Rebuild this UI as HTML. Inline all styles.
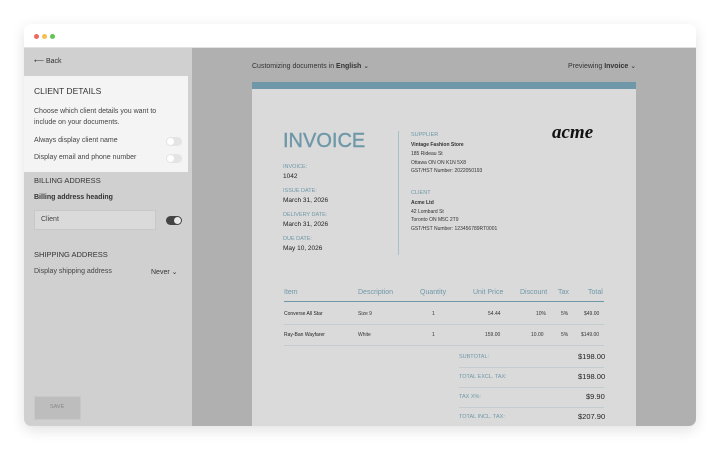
<!DOCTYPE html>
<html><head><meta charset="utf-8"><style>
*{margin:0;padding:0;box-sizing:border-box}
body{width:720px;height:450px;background:#fff;font-family:"Liberation Sans",sans-serif;position:relative;overflow:hidden;color:#333}
.win{position:absolute;left:24px;top:24px;width:672px;height:402px;border-radius:7px;overflow:hidden;box-shadow:0 4px 14px rgba(0,0,0,.12);background:#fff}
.tb{height:24px;background:#fff;border-bottom:1px solid #e2e2e2;position:relative}
.dot{position:absolute;top:10px;width:5px;height:5px;border-radius:50%}
.side{position:absolute;left:0;top:24px;width:168px;height:378px;background:#d0d0d0}
.main{position:absolute;left:168px;top:24px;width:504px;height:378px;background:#b0b0b0}
.a{position:absolute;white-space:nowrap}
.tog{position:absolute;width:16px;height:9px;border-radius:5px;background:#e4e4e4}
.tog i{position:absolute;top:1px;left:1px;width:7px;height:7px;border-radius:50%;background:#fff}
.paper{position:absolute;left:60px;top:34px;width:384px;height:344px;background:#dadada}
.lbl{color:#6e98a8;font-size:5.5px}
.v{font-size:6.5px;color:#222}
.s{font-size:5px;color:#333}
.th{position:absolute;top:207px;color:#6e98a8;font-size:7px}
.td{position:absolute;font-size:5px;color:#333}
.ln{position:absolute;height:1px;background:#c4ccd0}
</style></head><body>
<div class="win">
 <div class="tb">
  <div class="dot" style="left:10px;background:#ec6a5e"></div>
  <div class="dot" style="left:18px;background:#f4bf4f"></div>
  <div class="dot" style="left:26px;background:#61c554"></div>
 </div>
 <div class="side">
  <div class="a" style="left:10px;top:9px;font-size:7px;color:#333">⟵ Back</div>
  <div style="position:absolute;left:0;top:28px;width:164px;height:96px;background:#f4f4f4"></div>
  <div class="a" style="left:10px;top:38px;font-size:8.5px;color:#333">CLIENT DETAILS</div>
  <div class="a" style="left:10px;top:58px;font-size:7px;line-height:11px;color:#444">Choose which client details you want to<br>include on your documents.</div>
  <div class="a" style="left:10px;top:89px;font-size:7px;color:#444">Always display client name</div>
  <div class="tog" style="left:142px;top:89px"><i></i></div>
  <div class="a" style="left:10px;top:106px;font-size:7px;color:#444">Display email and phone number</div>
  <div class="tog" style="left:142px;top:106px"><i></i></div>
  <div class="a" style="left:10px;top:128px;font-size:7.5px;color:#333">BILLING ADDRESS</div>
  <div class="a" style="left:10px;top:146px;font-size:7px;color:#333;font-weight:bold">Billing address heading</div>
  <div style="position:absolute;left:10px;top:162px;width:122px;height:20px;background:#dadada;border:1px solid #c8c8c8"></div>
  <div class="a" style="left:17px;top:168px;font-size:7px;color:#444">Client</div>
  <div class="tog" style="left:142px;top:168px;background:#444"><i style="left:8px;background:#e8e8e8"></i></div>
  <div class="a" style="left:10px;top:202px;font-size:7.5px;color:#333">SHIPPING ADDRESS</div>
  <div class="a" style="left:10px;top:220px;font-size:7px;color:#444">Display shipping address</div>
  <div class="a" style="left:127px;top:220px;font-size:7px;color:#333">Never ⌄</div>
  <div style="position:absolute;left:10px;top:348px;width:47px;height:24px;background:#bdbdbd;border:1px solid #c8c8c8"></div>
  <div class="a" style="left:26px;top:356px;font-size:5.5px;color:#888">SAVE</div>
 </div>
 <div class="main">
  <div class="a" style="left:60px;top:14px;font-size:7px;color:#333">Customizing documents in <b>English</b> ⌄</div>
  <div class="a" style="left:376px;top:14px;font-size:7px;color:#333">Previewing <b>Invoice</b> ⌄</div>
  <div class="paper">
   <div style="height:7px;background:#6e98a8"></div>
   <div class="a" style="left:31px;top:48px;font-size:20px;color:#6e98a8;-webkit-text-stroke:.4px #6e98a8">INVOICE</div>
   <div class="a lbl" style="left:31px;top:82px">INVOICE:</div><div class="a v" style="left:31px;top:91px">1042</div>
   <div class="a lbl" style="left:31px;top:106px">ISSUE DATE:</div><div class="a v" style="left:31px;top:115px">March 31, 2026</div>
   <div class="a lbl" style="left:31px;top:130px">DELIVERY DATE:</div><div class="a v" style="left:31px;top:139px">March 31, 2026</div>
   <div class="a lbl" style="left:31px;top:154px">DUE DATE:</div><div class="a v" style="left:31px;top:163px">May 10, 2026</div>
   <div style="position:absolute;left:146px;top:49px;width:1px;height:124px;background:#a8c0c8"></div>
   <div class="a lbl" style="left:159px;top:50px">SUPPLIER</div>
   <div class="a s" style="left:159px;top:59px;font-weight:bold;line-height:8.6px">Vintage Fashion Store</div>
   <div class="a s" style="left:159px;top:68px;line-height:8.6px">185 Rideau St<br>Ottawa ON ON K1N 5X8<br>GST/HST Number: 2022050193</div>
   <div class="a lbl" style="left:159px;top:108px">CLIENT</div>
   <div class="a s" style="left:159px;top:117px;line-height:8.6px"><b>Acme Ltd</b><br>42 Lombard St<br>Toronto ON M5C 2T9<br>GST/HST Number: 123456789RT0001</div>
   <div class="a" style="left:300px;top:40px;font-size:19px;color:#111;font-family:'Liberation Serif',serif;font-style:italic;font-weight:bold">acme</div>
   <div class="th" style="left:32px">Item</div>
   <div class="th" style="left:106px">Description</div>
   <div class="th" style="left:168px">Quantity</div>
   <div class="th" style="left:221px">Unit Price</div>
   <div class="th" style="left:268px">Discount</div>
   <div class="th" style="left:306px">Tax</div>
   <div class="th" style="left:336px">Total</div>
   <div class="ln" style="left:32px;top:219px;width:320px;background:#6e98a8"></div>
   <div class="td" style="left:32px;top:229px;color:#222">Converse All Star</div>
   <div class="td" style="left:106px;top:229px">Size 9</div>
   <div class="td" style="left:180px;top:229px">1</div>
   <div class="td" style="left:236px;top:229px">54.44</div>
   <div class="td" style="left:284px;top:229px">10%</div>
   <div class="td" style="left:309px;top:229px">5%</div>
   <div class="td" style="left:332px;top:229px">$49.00</div>
   <div class="ln" style="left:32px;top:242px;width:320px"></div>
   <div class="td" style="left:32px;top:250px;color:#222">Ray-Ban Wayfarer</div>
   <div class="td" style="left:106px;top:250px">White</div>
   <div class="td" style="left:180px;top:250px">1</div>
   <div class="td" style="left:233px;top:250px">159.00</div>
   <div class="td" style="left:279px;top:250px">10.00</div>
   <div class="td" style="left:309px;top:250px">5%</div>
   <div class="td" style="left:329px;top:250px">$149.00</div>
   <div class="ln" style="left:32px;top:263px;width:320px"></div>
   <div class="a lbl" style="left:207px;top:272px">SUBTOTAL:</div><div class="a v" style="left:326px;top:270px;font-size:7.5px">$198.00</div>
   <div class="ln" style="left:207px;top:285px;width:145px"></div>
   <div class="a lbl" style="left:207px;top:292px">TOTAL EXCL. TAX:</div><div class="a v" style="left:326px;top:290px;font-size:7.5px">$198.00</div>
   <div class="ln" style="left:207px;top:305px;width:145px"></div>
   <div class="a lbl" style="left:207px;top:312px">TAX X%:</div><div class="a v" style="left:334px;top:310px;font-size:7.5px">$9.90</div>
   <div class="ln" style="left:207px;top:325px;width:145px"></div>
   <div class="a lbl" style="left:207px;top:332px">TOTAL INCL. TAX:</div><div class="a v" style="left:326px;top:330px;font-size:7.5px">$207.90</div>
  </div>
 </div>
</div>
</body></html>
